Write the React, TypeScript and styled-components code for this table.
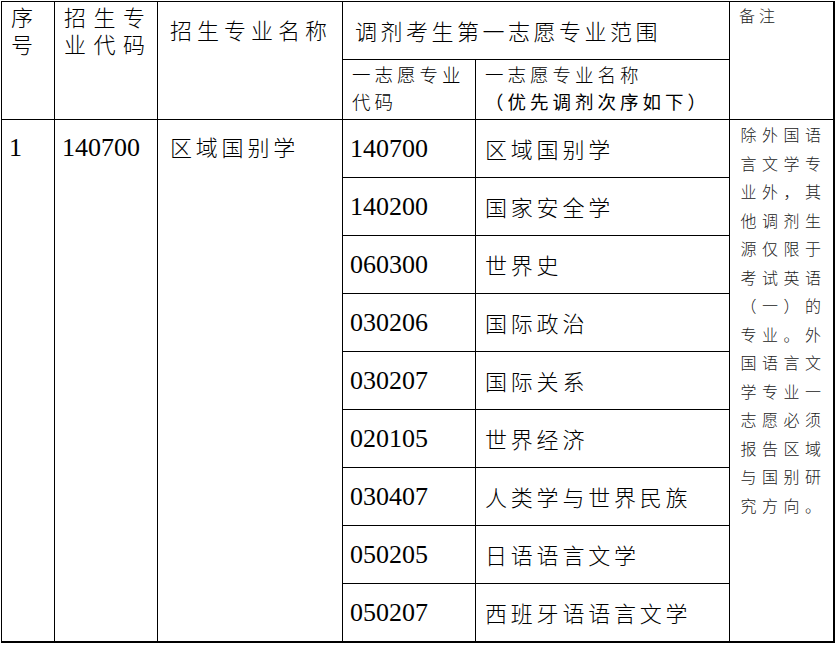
import React from "react";
import styled, { createGlobalStyle } from "styled-components";

const GlobalStyle = createGlobalStyle`
  html, body {
    margin: 0;
    padding: 0;
    background: #fff;
  }
  body {
    font-family: "Noto Sans CJK SC", sans-serif;
    color: #000;
  }
`;

const rows: [string, string][] = [
  ["140700", "区域国别学"],
  ["140200", "国家安全学"],
  ["060300", "世界史"],
  ["030206", "国际政治"],
  ["030207", "国际关系"],
  ["020105", "世界经济"],
  ["030407", "人类学与世界民族"],
  ["050205", "日语语言文学"],
  ["050207", "西班牙语语言文学"],
];

const note =
  "除外国语言文学专业外，其他调剂生源仅限于考试英语（一）的专业。外国语言文学专业一志愿必须报告区域与国别研究方向。";

export default function App() {
  return (
    <>
      <GlobalStyle />
      <Page>
        <Grid>
          <Cell $rows={2} $pt={1}>
            <Head>序号</Head>
          </Cell>
          <Cell $rows={2} $pt={1}>
            <Head $ls={7.5}>招生专业代码</Head>
          </Cell>
          <Cell $rows={2} $pt={14} $pad={12}>
            <Head $ls={5}>招生专业名称</Head>
          </Cell>
          <Cell $cols={2} $center $pad={12}>
            <Head>调剂考生第一志愿专业范围</Head>
          </Cell>
          <Cell $rows={2} $pt={2}>
            <Remark>备注</Remark>
          </Cell>

          <Cell $pt={1}>
            <Sub>一志愿专业代码</Sub>
          </Cell>
          <Cell $pt={1}>
            <Sub>一志愿专业名称</Sub>
            <Sub $strong>（优先调剂次序如下）</Sub>
          </Cell>

          <Cell $rows={9} $pt={14}>
            <Num>1</Num>
          </Cell>
          <Cell $rows={9} $pt={14}>
            <Num>140700</Num>
          </Cell>
          <Cell $rows={9} $pt={13} $pad={12}>
            <Name>区域国别学</Name>
          </Cell>
          {rows.map(([code, name], i) => (
            <React.Fragment key={code}>
              <Cell $center>
                <Num>{code}</Num>
              </Cell>
              <Cell $center>
                <Name>{name}</Name>
              </Cell>
              {i === 0 && (
                <Cell $rows={9} $pad={10.5}>
                  <Note>{note}</Note>
                </Cell>
              )}
            </React.Fragment>
          ))}
        </Grid>
      </Page>
    </>
  );
}

const Page = styled.div`
  padding: 1px 0 0 1px;
`;

const Grid = styled.div`
  display: grid;
  grid-template-columns: 52px 102px 184px 132px 253px 103px;
  grid-template-rows: 57px 59px repeat(9, 57px);
  gap: 1px;
  width: max-content;
  padding: 1px 2px 2px 1px;
  background: #000;
`;

const Cell = styled.div<{
  $rows?: number;
  $cols?: number;
  $center?: boolean;
  $pt?: number;
  $pad?: number;
}>`
  grid-row: span ${(p) => p.$rows ?? 1};
  grid-column: span ${(p) => p.$cols ?? 1};
  display: flex;
  flex-direction: column;
  justify-content: ${(p) => (p.$center ? "center" : "flex-start")};
  min-width: 0;
  padding: ${(p) => p.$pt ?? 0}px 4px 0 ${(p) => p.$pad ?? 9}px;
  background: #fff;
`;

const Head = styled.div<{ $ls?: number }>`
  font-size: 22px;
  line-height: 27px;
  font-weight: 300;
  letter-spacing: ${(p) => p.$ls ?? 3.5}px;
  color: #000;
`;

const Sub = styled.div<{ $strong?: boolean }>`
  font-size: 18.5px;
  line-height: 27px;
  font-weight: ${(p) => (p.$strong ? 400 : 300)};
  letter-spacing: 4px;
  color: #000;
`;

const Remark = styled.div`
  font-size: 16px;
  line-height: 22px;
  font-weight: 300;
  letter-spacing: 4px;
  color: #222;
`;

const Num = styled.div`
  margin-left: -2px;
  font-family: "Liberation Serif", "Noto Sans CJK SC", serif;
  font-size: 26px;
  line-height: 27px;
  color: #000;
`;

const Name = styled.div`
  font-size: 22px;
  line-height: 27px;
  font-weight: 300;
  letter-spacing: 3.8px;
  color: #000;
`;

const Note = styled.div`
  font-size: 16px;
  line-height: 28.5px;
  font-weight: 300;
  letter-spacing: 5.5px;
  color: #222;
`;
